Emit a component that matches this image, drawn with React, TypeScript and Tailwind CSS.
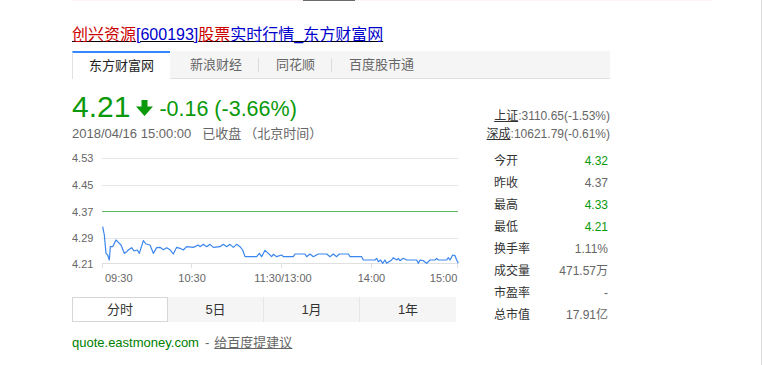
import React from "react";

const FONT = { fontFamily: '"Liberation Sans", Arial, "Noto Sans CJK SC", sans-serif' };

const pts: [number, number][] = [
  [128, 245], [133, 270], [138, 325], [143, 330], [148, 345], [151, 305], [158, 305], [163, 295], [168, 285], [175, 292], [183, 300], [193, 325], [200, 320], [205, 315], [215, 308], [222, 318], [232, 315], [238, 325], [250, 287], [258, 297], [270, 300], [280, 325], [290, 308], [300, 307], [310, 314], [320, 308], [330, 314], [340, 327], [350, 307], [360, 310], [370, 315], [380, 305], [400, 307], [415, 300], [420, 305], [430, 298], [440, 305], [450, 298], [460, 307], [480, 305], [490, 298], [500, 305], [510, 298], [520, 307], [530, 298], [540, 305], [548, 315], [555, 335], [590, 335], [598, 325], [605, 335], [615, 316], [625, 325], [635, 335], [640, 328], [650, 335], [665, 330], [670, 335], [700, 335], [705, 327], [735, 327], [740, 335], [750, 327], [760, 335], [775, 327], [800, 327], [810, 335], [820, 327], [830, 335], [838, 327], [865, 327], [870, 335], [905, 335], [910, 345], [945, 345], [950, 340], [955, 350], [962, 345], [968, 355], [975, 345], [980, 355], [995, 345], [1000, 338], [1010, 345], [1015, 340], [1020, 347], [1030, 340], [1040, 345], [1045, 345], [1070, 345], [1075, 355], [1080, 345], [1090, 347], [1100, 355], [1110, 345], [1125, 345], [1130, 340], [1135, 345], [1160, 345], [1165, 338], [1170, 345], [1178, 330], [1185, 332], [1190, 345], [1195, 355],
];

function Chart() {
  const d = pts.map((p, i) => (i === 0 ? "M" : "L") + p[0] + " " + p[1]).join(" ");
  const yl: [string, number][] = [["4.53", 40], ["4.45", 120], ["4.37", 200], ["4.29", 280], ["4.21", 357]];
  const xl: [string, number, "start" | "end"][] = [["09:30", 135, "start"], ["10:30", 355, "start"], ["11:30/13:00", 583, "start"], ["14:00", 893, "start"], ["15:00", 1192, "end"]];
  return (
    <svg width="398" height="140" viewBox="36 15 1194 420" className="block" style={FONT}>
      {[40, 120, 280].map((y) => (
        <line key={y} x1="125" x2="1195" y1={y} y2={y} stroke="#e6e6e6" strokeWidth="1" vectorEffect="non-scaling-stroke" shapeRendering="crispEdges" />
      ))}
      <line x1="125" x2="1195" y1="200" y2="200" stroke="#5cb85c" strokeWidth="1" vectorEffect="non-scaling-stroke" shapeRendering="crispEdges" />
      <line x1="125" x2="1195" y1="355" y2="355" stroke="#e0e0e0" strokeWidth="1" vectorEffect="non-scaling-stroke" shapeRendering="crispEdges" />
      {[128, 395, 665, 935, 1193].map((x) => (
        <line key={x} x1={x} x2={x} y1="355" y2="370" stroke="#e0e0e0" strokeWidth="1" vectorEffect="non-scaling-stroke" shapeRendering="crispEdges" />
      ))}
      {yl.map(([t, y]) => (
        <text key={t} x="36" y={y} fontSize="33" fill="#666" dominantBaseline="central">{t}</text>
      ))}
      {xl.map(([t, x, a]) => (
        <text key={t} x={x} y="400" fontSize="33" fill="#666" dominantBaseline="central" textAnchor={a}>{t}</text>
      ))}
      <path d={d} fill="none" stroke="#3a86ee" strokeWidth="1.2" vectorEffect="non-scaling-stroke" strokeLinejoin="round" />
    </svg>
  );
}

const stats: [string, string, boolean][] = [
  ["今开", "4.32", true],
  ["昨收", "4.37", false],
  ["最高", "4.33", true],
  ["最低", "4.21", true],
  ["换手率", "1.11%", false],
  ["成交量", "471.57万", false],
  ["市盈率", "-", false],
  ["总市值", "17.91亿", false],
];

export default function App() {
  return (
    <div className="w-[762px] min-h-[365px] bg-white border-r border-[#dcdcdc]" style={FONT}>
      <div className="flex h-px ml-[72px]">
        <div className="w-[231px] bg-[#fdf4f4]" />
        <div className="w-[52px] bg-[#6b6b6b]" />
        <div className="w-[357px] bg-[#fdf4f4]" />
      </div>
      <div className="ml-[72px] w-[538px]">
        <div className="mt-[23px] text-[16px] leading-[22px] underline whitespace-nowrap">
          <span className="text-[#cc0000]">创兴资源</span>
          <span className="text-[#0000cc]">[600193]</span>
          <span className="text-[#cc0000]">股票</span>
          <span className="text-[#0000cc]">实时行情_东方财富网</span>
        </div>
        <div className="mt-[5px] flex items-center h-[28px] bg-[#f5f5f5] border-b border-[#e1e1e1] text-[13px]">
          <div className="h-[28px] -mb-px flex items-center px-4 bg-white border-t-2 border-t-[#3388ff] border-l border-l-[#e1e1e1] text-[#222]">东方财富网</div>
          <span className="pl-[20px] pr-[16px] text-[#666]">新浪财经</span>
          <span className="w-px h-[14px] bg-[#dcdcdc]" />
          <span className="pl-[17px] pr-[16px] text-[#666]">同花顺</span>
          <span className="w-px h-[14px] bg-[#dcdcdc]" />
          <span className="pl-[17px] text-[#666]">百度股市通</span>
        </div>
        <div className="mt-[13px] flex">
          <div className="w-[408px]">
            <div className="flex items-center h-[30px] text-[#0a990a]">
              <span className="text-[30px] leading-[30px]">4.21</span>
              <svg width="17" height="16" viewBox="0 0 17 16" className="ml-[6px] mt-[2px]">
                <path d="M5.5 0 H11.5 V6.5 H17 L8.5 16 L0 6.5 H5.5 Z" fill="#0a990a" />
              </svg>
              <span className="ml-[6px] text-[21.5px] leading-[30px] mt-[3px]">-0.16 (-3.66%)</span>
            </div>
            <div className="mt-[2px] h-[20px] leading-[20px] text-[13px] text-[#666] whitespace-nowrap">
              <span>2018/04/16 15:00:00</span>
              <span className="ml-[11px]">已收盘</span>
              <span className="ml-[3px]">（北京时间）</span>
            </div>
            <div className="mt-[6px]">
              <Chart />
            </div>
            <div className="mt-[7px] w-[384px] h-[25px] flex bg-[#f5f5f5] text-[13px] text-[#333]">
              <div className="w-[96px] flex items-center justify-center bg-white border border-[#d6d6d6]">分时</div>
              <div className="w-[96px] flex items-center justify-center border-r border-[#e6e6e6]">5日</div>
              <div className="w-[96px] flex items-center justify-center border-r border-[#e6e6e6]">1月</div>
              <div className="w-[96px] flex items-center justify-center">1年</div>
            </div>
            <div className="mt-[11px] h-[20px] leading-[20px] text-[13px] whitespace-nowrap">
              <span className="text-[#008000]">quote.eastmoney.com</span>
              <span className="text-[#666] ml-[6px]">-</span>
              <span className="text-[#666] ml-[5px] underline">给百度提建议</span>
            </div>
          </div>
          <div className="w-[130px] mt-[15px] text-[12px]">
            <div className="text-right leading-[18px] text-[#666] whitespace-nowrap">
              <span className="underline text-[#333]">上证</span>:3110.65(-1.53%)
            </div>
            <div className="text-right leading-[18px] text-[#666] whitespace-nowrap">
              <span className="underline text-[#333]">深成</span>:10621.79(-0.61%)
            </div>
            <div className="mt-[7px]">
              {stats.map(([k, v, g]) => (
                <div key={k} className="flex justify-between h-[22px] leading-[22px] pl-[14px] pr-[2px]">
                  <span className="text-[#333]">{k}</span>
                  <span className={g ? "text-[#0a990a]" : "text-[#666]"}>{v}</span>
                </div>
              ))}
            </div>
          </div>
        </div>
      </div>
    </div>
  );
}
